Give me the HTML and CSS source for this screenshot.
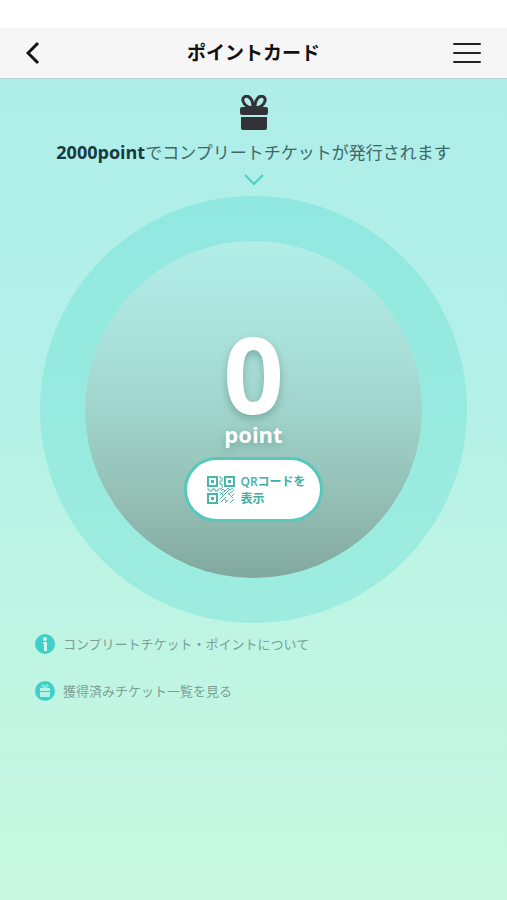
FILE: index.html
```html
<!DOCTYPE html>
<html lang="ja">
<head>
    <meta charset="UTF-8">
    <meta name="viewport" content="width=device-width, initial-scale=1.0">
    <title>ポイントカード</title>
    <link rel="stylesheet" href="styles.css">
</head>
<body>

<header>
    <button class="iconButton" aria-label="戻る">
        <svg width="16" height="24" viewBox="0 0 16 24" fill="none" stroke="#111" stroke-width="3">
            <path d="M12 2L2 12l10 10"/>
        </svg>
    </button>
    <h1>ポイントカード</h1>
    <button class="iconButton" aria-label="メニュー">
        <svg width="28" height="22" viewBox="0 0 28 22" fill="none" stroke="#222" stroke-width="2" stroke-linecap="round">
            <path d="M1 2h26M1 11h26M1 20h26"/>
        </svg>
    </button>
</header>

<main>
    <section class="notice">
        <svg width="28" height="36" viewBox="0 0 28 36" fill="#333238">
            <path d="M13 12C9 14 4 10 3 6S6 0 9 2s4 6 4 10zM15 12c4 2 9-2 10-6s-3-6-6-4-4 6-4 10z" fill="none" stroke="#333238" stroke-width="3"/>
            <rect x="0" y="12" width="28" height="8" rx="2"/>
            <path d="M1 22h26v11q0 2-2 2H3q-2 0-2-2z"/>
        </svg>
        <p><strong>2000point</strong>でコンプリートチケットが発行されます</p>
        <svg width="20" height="12" viewBox="0 0 20 12" fill="none" stroke="#4fd0c3" stroke-width="2">
            <path d="M1 1l9 9 9-9"/>
        </svg>
    </section>

    <section class="ring">
        <div class="circle">
            <div class="count">0</div>
            <div class="unit">point</div>
            <button class="qrButton">
                <svg width="28" height="28" viewBox="0 0 28 28" fill="none" stroke="#4bb5aa">
                    <path d="M1 1h9v9H1zM18 1h9v9h-9zM1 18h9v9H1z" stroke-width="2"/>
                    <path d="M4 4h3v3H4zM21 4h3v3h-3zM4 21h3v3H4z" fill="#4bb5aa" stroke="none"/>
                    <path d="M13 0v2h2v3h-2v3h2v3M0 13h2v2h3v-2h3v2h3v-2h3l2-2M14 15l2-2 2 2 3-3 2 2 3-2M13 19l6-5M13 23l9-9M14 26l5-5M22 18l5-4M18 27l3-3M24 21l3-3M23 27l4-4M13 16l3 3M21 17l5 5M17 22l3 4"/>
                </svg>
                <span>QRコードを<br>表示</span>
            </button>
        </div>
    </section>

    <nav>
        <a href="#about">
            <svg width="21" height="21" viewBox="0 0 21 21">
                <circle cx="10" cy="10" r="10" fill="#3fd0c9"/>
                <circle cx="10" cy="5" r="2" fill="#d2faef"/>
                <path d="M8 8h4v9H9v-7H8z" fill="#d2faef"/>
            </svg>
            コンプリートチケット・ポイントについて
        </a>
        <a href="#tickets">
            <svg width="21" height="21" viewBox="0 0 21 21">
                <circle cx="10" cy="10" r="10" fill="#3fd0c9"/>
                <path d="M10 7C7 7 6 4 8 4s2 3 2 3 0-3 2-3 1 3-2 3z" fill="none" stroke="#b5f3e7"/>
                <path d="M5 7h10v3H5zM5 11h10v5H5z" fill="#b5f3e7"/>
            </svg>
            獲得済みチケット一覧を見る
        </a>
    </nav>
</main>

</body>
</html>
```
FILE: styles.css
```css
* {
    box-sizing: border-box;
}

body {
    font-family: 'Open Sans', 'Noto Sans CJK JP', sans-serif;
    margin: 0;
    padding-top: 28px;
    min-height: 100vh;
    display: flex;
    flex-direction: column;
    background-color: #fff;
}

button {
    font-family: inherit;
    padding: 0;
    border: none;
    background: none;
    cursor: pointer;
}

svg {
    display: block;
    flex-shrink: 0;
}

header {
    display: flex;
    justify-content: space-between;
    align-items: center;
    height: 51px;
    padding: 0 26px;
    background-color: #f6f6f6;
    border-bottom: 1px solid #b4d5d2;
}

header h1 {
    margin: 0;
    font-size: 19px;
    line-height: 28px;
    font-weight: 700;
    color: #111;
}

.iconButton {
    display: flex;
    width: 36px;
}

.iconButton:last-child {
    justify-content: flex-end;
}

main {
    flex: 1;
    background: linear-gradient(#afeee8 0%, #b2f0e8 35%, #bdf4e4 60%, #c8f8e1 100%);
}

.notice {
    display: flex;
    flex-direction: column;
    align-items: center;
    padding-top: 16px;
}

.notice p {
    margin: 8px 0;
    font-size: 17px;
    line-height: 27px;
    font-weight: 400;
    color: #3d6668;
}

.notice strong {
    font-size: 18px;
    font-weight: 700;
    color: #173a40;
}

/* point circle */
.ring {
    margin: 10px 40px 0;
    padding: 45px;
    aspect-ratio: 1;
    border-radius: 50%;
    background: linear-gradient(#91e8e0, #9eecdf);
}

.circle {
    display: flex;
    flex-direction: column;
    align-items: center;
    height: 100%;
    padding-top: 84px;
    border-radius: 50%;
    background: linear-gradient(#b2eee8, #a9e1da 30%, #a0d3ca 52%, #93bdb3 78%, #82a89e);
    color: #fff;
    font-weight: 700;
}

.count {
    font-size: 106px;
    line-height: 96px;
    text-shadow: 0 4px 8px rgba(60, 110, 100, 0.4);
}

.unit {
    font-size: 22px;
    line-height: 26px;
    text-shadow: 0 3px 8px rgba(60, 110, 100, 0.4);
}

.qrButton {
    display: flex;
    justify-content: center;
    align-items: center;
    gap: 5px;
    width: 139px;
    height: 65px;
    margin-top: 10px;
    padding-left: 6px;
    border: 3px solid #58c8bd;
    border-radius: 33px;
    background-color: #fff;
    color: #3faea3;
    font-size: 12px;
    line-height: 17px;
    font-weight: 600;
    text-align: left;
}

nav {
    display: flex;
    flex-direction: column;
    gap: 26px;
    padding: 11px 35px 24px;
}

nav a {
    display: flex;
    align-items: center;
    gap: 7px;
    font-size: 13px;
    line-height: 21px;
    color: #7b9f96;
    text-decoration: none;
}
```
